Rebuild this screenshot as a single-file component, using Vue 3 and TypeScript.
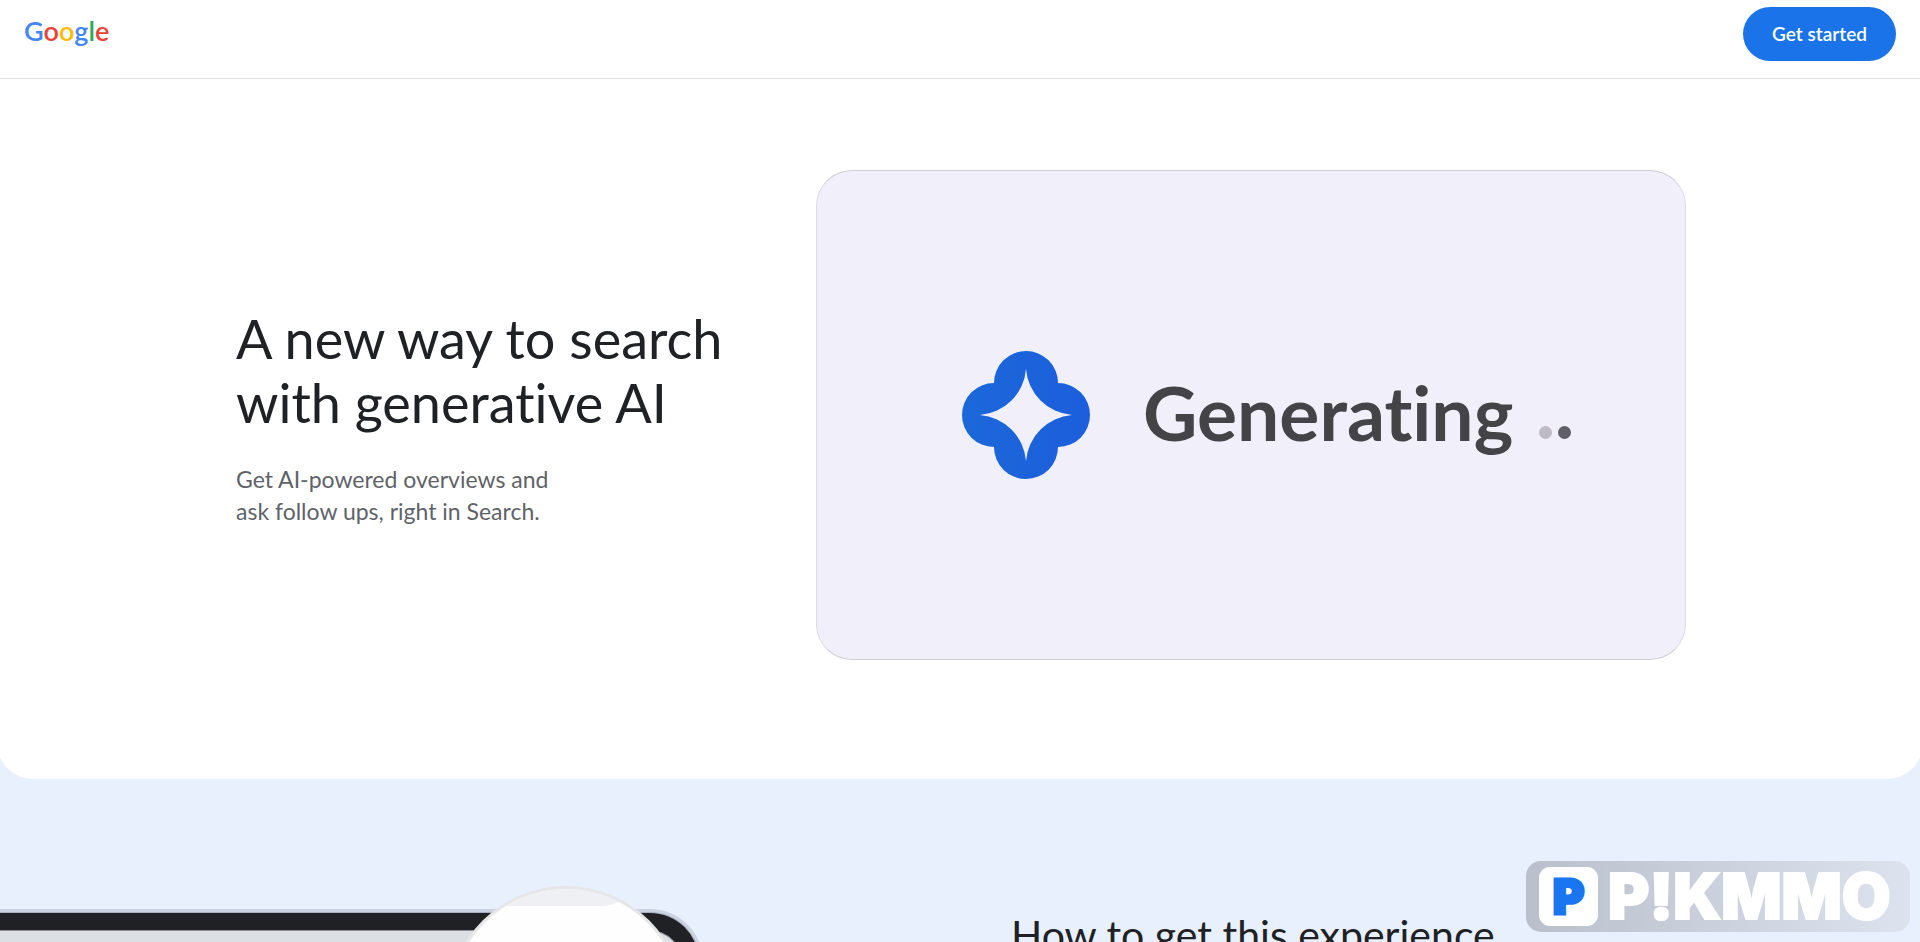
<script setup lang="ts">
interface LogoLetter {
  char: string
  tone: 'blue' | 'red' | 'yellow' | 'green'
}

const logo: LogoLetter[] = [
  { char: 'G', tone: 'blue' },
  { char: 'o', tone: 'red' },
  { char: 'o', tone: 'yellow' },
  { char: 'g', tone: 'blue' },
  { char: 'l', tone: 'green' },
  { char: 'e', tone: 'red' },
]
</script>

<template>
  <div class="page">
    <header class="topbar">
      <a class="logo" href="#" aria-label="Google">
        <span v-for="(letter, i) in logo" :key="i" :class="letter.tone">{{ letter.char }}</span>
      </a>
      <button class="cta" type="button">Get started</button>
    </header>

    <main class="content">
      <section class="hero">
        <div class="hero-inner">
          <div class="hero-copy">
            <h1>A new way to search<br />with generative AI</h1>
            <p>Get AI-powered overviews and<br />ask follow ups, right in Search.</p>
          </div>
          <div class="hero-card">
            <svg class="spark" viewBox="0 0 128 128" aria-hidden="true">
              <defs>
                <linearGradient id="sparkFill" x1="0" y1="0" x2="1" y2="0">
                  <stop offset="0" stop-color="#1b68d9" />
                  <stop offset="1" stop-color="#1c5edc" />
                </linearGradient>
              </defs>
              <path
                fill="url(#sparkFill)"
                d="M32 32A32 32 0 0 1 96 32A32 32 0 0 1 96 96A32 32 0 0 1 32 96A32 32 0 0 1 32 32Z"
              />
              <path
                fill="#f1effa"
                d="M64 18A50 50 0 0 0 110 64A50 50 0 0 0 64 110A50 50 0 0 0 18 64A50 50 0 0 0 64 18Z"
              />
            </svg>
            <span class="generating">Generating</span>
            <span class="dots" aria-hidden="true"><i class="dot pale"></i><i class="dot"></i></span>
          </div>
        </div>
      </section>

      <section class="howto">
        <svg class="tablet" viewBox="0 0 704 240" aria-hidden="true">
          <defs>
            <clipPath id="lens"><circle cx="566" cy="119" r="115" /></clipPath>
          </defs>
          <rect x="-60" y="24" width="763" height="400" rx="53" fill="#cbd3e3" />
          <rect x="-60" y="27" width="760" height="400" rx="50" fill="#a9afbd" />
          <rect x="-60" y="28" width="759" height="400" rx="49" fill="#202124" />
          <rect x="-60" y="45" width="743" height="400" rx="34" fill="#8f8f96" />
          <rect x="-60" y="46" width="742" height="400" rx="33" fill="#dcdfe3" />
          <circle cx="566" cy="119" r="118" fill="#e6e6e9" />
          <circle cx="566" cy="119" r="115" fill="#fefefe" />
          <path d="M440 0H640V6C628 10 620 21 600 21H440Z" fill="#eff0f3" clip-path="url(#lens)" />
        </svg>
        <div class="howto-copy">
          <h2>How to get this experience</h2>
        </div>
      </section>
    </main>

    <aside class="watermark" aria-label="PIKMMO">
      <span class="badge">P</span>
      <span class="brand">P!KMMO</span>
    </aside>
  </div>
</template>

<style>
body {
  margin: 0;
}
</style>

<style scoped>
.page {
  height: 100vh;
  overflow: hidden;
  background: #fff;
  color: #202124;
  font-family: Lato, 'Liberation Sans', sans-serif;
  font-variant-ligatures: none;
}

.topbar {
  display: flex;
  align-items: flex-start;
  justify-content: space-between;
  box-sizing: border-box;
  height: 79px;
  padding: 7px 24px 0;
  border-bottom: 1px solid #dfe1e4;
}

.logo {
  margin-top: 6px;
  font-size: 27px;
  line-height: 36px;
  font-weight: 600;
  text-decoration: none;
}

.blue { color: #4285f4; }
.red { color: #ea4335; }
.yellow { color: #fbbc05; }
.green { color: #34a853; }

.cta {
  height: 54px;
  padding: 0 29px;
  border: 0;
  border-radius: 27px;
  background: #1a73e8;
  color: #fff;
  font: 600 19px/54px Lato, 'Liberation Sans', sans-serif;
  cursor: pointer;
}

.content {
  background: #e8effd;
}

.hero {
  margin: 0 -3px;
  padding: 91px 24px 119px;
  border-radius: 0 0 36px 36px;
  background: #fff;
}

.hero-inner {
  display: grid;
  grid-template-columns: 2fr 3fr;
  align-items: center;
  max-width: 1450px;
  margin: 0 auto;
  padding-left: 2px;
}

h1,
h2,
p {
  margin: 0;
  font-weight: 400;
}

.hero-copy {
  padding-top: 4px;
}

h1 {
  font-size: 54px;
  line-height: 64px;
}

.hero-copy p {
  margin-top: 28px;
  color: #5f6368;
  font-size: 23px;
  line-height: 32px;
}

.hero-card {
  display: flex;
  align-items: center;
  box-sizing: border-box;
  height: 490px;
  padding-left: 145px;
  border: 1px solid #dcdae2;
  border-top-color: #cfced6;
  border-bottom-color: #cfced6;
  border-radius: 36px;
  background: #f1effa;
}

.spark {
  flex: none;
  width: 128px;
  height: 128px;
}

.generating {
  margin-bottom: 7px;
  margin-left: 53px;
  color: #444347;
  font-size: 75px;
  line-height: 90px;
  font-weight: 700;
}

.dots {
  display: flex;
  gap: 6px;
  margin-top: 34px;
  margin-left: 26px;
}

.dot {
  width: 13px;
  height: 13px;
  border-radius: 50%;
  background: #605e67;
}

.dot.pale {
  background: #bebbc7;
}

.howto {
  display: grid;
  grid-template-columns: calc(50% + 51px) 1fr;
  padding-top: 106px;
}

.tablet {
  width: 704px;
  height: 240px;
}

.howto-copy {
  padding-top: 24px;
}

h2 {
  font-size: 41px;
  line-height: 52px;
}

.watermark {
  position: absolute;
  right: 10px;
  bottom: 10px;
  display: flex;
  align-items: center;
  box-sizing: border-box;
  width: 384px;
  height: 71px;
  padding-left: 13px;
  border-radius: 15px;
  background: linear-gradient(90deg, #b9bfcb, #dde3ee);
  font-family: Inter, 'Open Sans', sans-serif;
  font-weight: 900;
}

.badge {
  width: 59px;
  height: 59px;
  border-radius: 11px;
  background: #fff;
  color: #1a76f0;
  font-size: 48px;
  line-height: 59px;
  text-align: center;
  -webkit-text-stroke: 3px #1a76f0;
}

.brand {
  margin-left: 10px;
  color: #fff;
  font-size: 63px;
  line-height: 71px;
  -webkit-text-stroke: 2px #fff;
}
</style>
